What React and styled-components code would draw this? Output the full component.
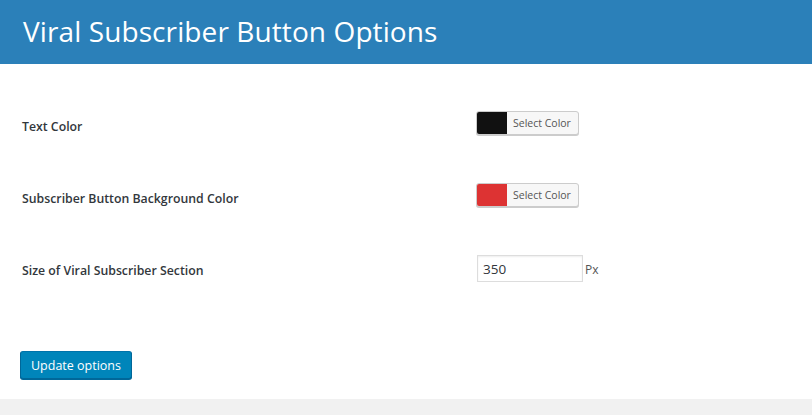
import styled, { createGlobalStyle } from "styled-components";

const GlobalStyle = createGlobalStyle`
    * {
        box-sizing: border-box;
    }
    body {
        margin: 0;
        background: #F1F1F1;
        font-family: "Open Sans", "Noto Sans", sans-serif;
        color: #23282D;
    }
`;

const options = [
    { label: "Text Color", type: "color", color: "#111111" },
    { label: "Subscriber Button Background Color", type: "color", color: "#DD3333" },
    { label: "Size of Viral Subscriber Section", type: "size", value: "350" }
];

export default function App() {
    return (
        <>
            <GlobalStyle />
            <Header>
                <h1>Viral Subscriber Button Options</h1>
            </Header>
            <Panel>
                {options.map((opt, i) => (
                    <Row key={i}>
                        <Label>{opt.label}</Label>
                        {opt.type === "color" ? (
                            <ColorButton type="button">
                                <Swatch $color={opt.color} />
                                <span>Select Color</span>
                            </ColorButton>
                        ) : (
                            <SizeField>
                                <input type="text" defaultValue={opt.value} />
                                <span>Px</span>
                            </SizeField>
                        )}
                    </Row>
                ))}
                <SubmitButton type="button">Update options</SubmitButton>
            </Panel>
        </>
    );
}

const Header = styled.div`
    height: 64px;
    background: #2B80B9;
    display: flex;
    align-items: center;
    padding-left: 23px;
    h1 {
        margin: 0 0 2px 0;
        font-size: 28px;
        font-weight: 400;
        color: #FFFFFF;
        letter-spacing: 0.1px;
    }
`;

const Panel = styled.div`
    background: #FFFFFF;
    padding: 23px 20px 20px 20px;
    display: flex;
    flex-direction: column;
    align-items: flex-start;
`;

const Row = styled.div`
    display: grid;
    grid-template-columns: 454px auto;
    align-items: start;
    padding: 24px 0 24px 2px;
    width: 100%;
`;

const Label = styled.div`
    font-size: 12.3px;
    font-weight: 600;
    line-height: 16px;
    padding-top: 8px;
    color: #32373C;
`;

const ColorButton = styled.button`
    display: flex;
    align-items: center;
    height: 24px;
    width: 103px;
    padding: 0;
    border: 1px solid #CCCCCC;
    border-radius: 3px;
    background: #F7F7F7;
    box-shadow: 0 1px 0 #CCCCCC;
    overflow: hidden;
    cursor: pointer;
    span {
        font-family: "Open Sans", "Noto Sans", sans-serif;
        font-size: 10.5px;
        color: #555555;
        padding-left: 6px;
        white-space: nowrap;
    }
`;

const Swatch = styled.div`
    width: 30px;
    height: 100%;
    background: ${props => props.$color};
`;

const SizeField = styled.div`
    display: flex;
    align-items: center;
    margin-left: 1px;
    input {
        width: 106px;
        height: 27px;
        border: 1px solid #DDDDDD;
        box-shadow: inset 0 1px 2px rgba(0, 0, 0, 0.07);
        padding: 0 5px;
        font-family: "Open Sans", "Noto Sans", sans-serif;
        font-size: 13.5px;
        color: #32373C;
        outline: none;
    }
    span {
        font-size: 12px;
        color: #555555;
        margin-left: 2px;
        padding-top: 2px;
    }
`;

const SubmitButton = styled.button`
    margin-top: 45px;
    height: 28px;
    padding: 0 10px;
    background: #0085BA;
    border: 1px solid #0073AA;
    border-color: #0073AA #006799 #006799;
    border-radius: 3px;
    box-shadow: 0 1px 0 #006799;
    color: #FFFFFF;
    font-family: "Open Sans", "Noto Sans", sans-serif;
    font-size: 12.5px;
    cursor: pointer;
`;
